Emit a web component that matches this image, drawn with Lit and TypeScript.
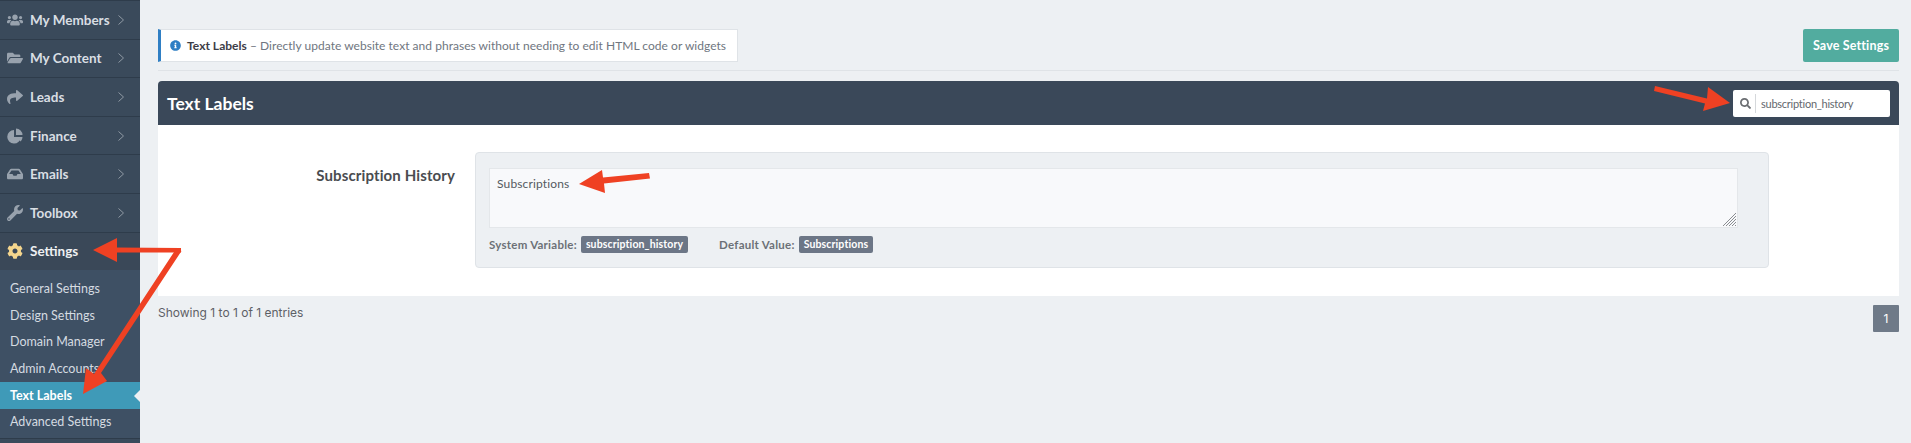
import { LitElement, html, css, svg } from "lit";
import { customElement } from "lit/decorators.js";

const I = {
  users: ["0 0 640 512", "M96 224c35.3 0 64-28.7 64-64s-28.7-64-64-64-64 28.7-64 64 28.7 64 64 64zm448 0c35.3 0 64-28.7 64-64s-28.7-64-64-64-64 28.7-64 64 28.7 64 64 64zm32 32h-64c-17.6 0-33.5 7.1-45.1 18.6 40.3 22.1 68.9 62 75.1 109.4h66c17.7 0 32-14.3 32-32v-32c0-35.3-28.7-64-64-64zm-256 0c61.9 0 112-50.1 112-112S381.9 32 320 32 208 82.1 208 144s50.1 112 112 112zm76.8 32h-8.3c-20.8 10-43.9 16-68.5 16s-47.6-6-68.5-16h-8.3C179.6 288 128 339.6 128 403.2V432c0 26.5 21.5 48 48 48h288c26.5 0 48-21.5 48-48v-28.8c0-63.6-51.6-115.2-115.2-115.2zm-223.7-13.4C161.5 263.1 145.6 256 128 256H64c-35.3 0-64 28.7-64 64v32c0 17.7 14.3 32 32 32h65.9c6.3-47.4 34.9-87.3 75.2-109.4z"],
  folder: ["0 0 576 512", "M572.694 292.093L500.27 416.248A63.997 63.997 0 0 1 444.989 448H45.025c-18.523 0-30.064-20.093-20.731-36.093l72.424-124.155A64 64 0 0 1 152 256h399.964c18.523 0 30.064 20.093 20.73 36.093zM152 224h328v-48c0-26.51-21.49-48-48-48H272l-64-64H48C21.49 64 0 85.49 0 112v278.046l69.077-118.418C86.214 242.25 117.989 224 152 224z"],
  share: ["0 0 512 512", "M503.691 189.836L327.687 37.851C312.281 24.546 288 35.347 288 56.015v80.053C127.371 137.907 0 170.1 0 322.326c0 61.441 39.581 122.309 83.333 154.132 13.653 9.931 33.111-2.533 28.077-18.631C66.066 312.814 132.917 274.316 288 272.085V360c0 20.7 24.3 31.453 39.687 18.164l176.004-152c11.071-9.562 11.086-26.753 0-36.328z"],
  pie: ["0 0 512 512", "M224 64A216 216 0 1 0 440 288H224ZM288 16V224H496A208 208 0 0 0 288 16ZM296 288L440 432A208 208 0 0 0 496 288Z"],
  inbox: ["0 0 576 512", "M567.938 243.908L462.25 85.374A48.003 48.003 0 0 0 422.311 64H153.689a48 48 0 0 0-39.938 21.374L8.062 243.908A47.994 47.994 0 0 0 0 270.533V400c0 26.51 21.49 48 48 48h480c26.51 0 48-21.49 48-48V270.533a47.994 47.994 0 0 0-8.062-26.625zM162.252 128h251.497l85.333 128H376l-32 64H232l-32-64H76.918l85.334-128z"],
  wrench: ["0 0 512 512", "M507.73 109.1c-2.24-9.03-13.54-12.09-20.12-5.51l-74.36 74.36-67.88-11.31-11.31-67.88 74.36-74.36c6.62-6.62 3.43-17.9-5.66-20.16-47.38-11.74-99.55.91-136.58 37.93-39.64 39.64-50.55 97.1-34.05 147.2L18.74 402.76c-24.99 24.99-24.99 65.51 0 90.5 24.99 24.99 65.51 24.99 90.5 0l213.21-213.21c50.12 16.71 107.47 5.68 147.37-34.22 37.07-37.07 49.7-89.32 37.91-136.73zM64 472c-13.25 0-24-10.75-24-24 0-13.26 10.75-24 24-24s24 10.74 24 24c0 13.25-10.75 24-24 24z"],
  cog: ["0 0 512 512", "M487.4 315.7l-42.6-24.6c4.3-23.2 4.3-47 0-70.2l42.6-24.6c4.9-2.8 7.1-8.6 5.5-14-11.1-35.6-30-67.8-54.7-94.6-3.8-4.1-10-5.1-14.8-2.3L380.8 110c-17.9-15.4-38.5-27.3-60.8-35.1V25.8c0-5.6-3.9-10.5-9.4-11.7-36.7-8.2-74.3-7.8-109.2 0-5.5 1.2-9.4 6.1-9.4 11.7V75c-22.2 7.9-42.8 19.8-60.8 35.1L88.7 85.5c-4.9-2.8-11-1.9-14.8 2.3-24.7 26.7-43.6 58.9-54.7 94.6-1.7 5.4.6 11.2 5.5 14L67.3 221c-4.3 23.2-4.3 47 0 70.2l-42.6 24.6c-4.9 2.8-7.1 8.6-5.5 14 11.1 35.6 30 67.8 54.7 94.6 3.8 4.1 10 5.1 14.8 2.3l42.6-24.6c17.9 15.4 38.5 27.3 60.8 35.1v49.2c0 5.6 3.9 10.5 9.4 11.7 36.7 8.2 74.3 7.8 109.2 0 5.5-1.2 9.4-6.1 9.4-11.7v-49.2c22.2-7.9 42.8-19.8 60.8-35.1l42.6 24.6c4.9 2.8 11 1.9 14.8-2.3 24.7-26.7 43.6-58.9 54.7-94.6 1.5-5.5-.7-11.3-5.6-14.1zM256 336c-44.1 0-80-35.9-80-80s35.9-80 80-80 80 35.9 80 80-35.9 80-80 80z"],
  info: ["0 0 512 512", "M256 8C119.043 8 8 119.083 8 256c0 136.997 111.043 248 248 248s248-111.003 248-248C504 119.083 392.957 8 256 8zm0 110c23.196 0 42 18.804 42 42s-18.804 42-42 42-42-18.804-42-42 18.804-42 42-42zm56 254c0 6.627-5.373 12-12 12h-88c-6.627 0-12-5.373-12-12v-24c0-6.627 5.373-12 12-12h12v-64h-12c-6.627 0-12-5.373-12-12v-24c0-6.627 5.373-12 12-12h64c6.627 0 12 5.373 12 12v100h12c6.627 0 12 5.373 12 12v24z"],
  search: ["0 0 512 512", "M505 442.7L405.3 343c-4.5-4.5-10.6-7-17-7H372c27.6-35.3 44-79.7 44-128C416 93.1 322.9 0 208 0S0 93.1 0 208s93.1 208 208 208c48.3 0 92.7-16.4 128-44v16.3c0 6.4 2.5 12.5 7 17l99.7 99.7c9.4 9.4 24.6 9.4 33.9 0l28.3-28.3c9.4-9.4 9.4-24.6.1-34zM208 336c-70.7 0-128-57.2-128-128 0-70.7 57.2-128 128-128 70.7 0 128 57.2 128 128 0 70.7-57.2 128-128 128z"],
} as const;

type IconName = keyof typeof I;
const icon = (n: IconName, cls = "") =>
  html`<svg class="ic ${cls}" viewBox=${I[n][0]} fill="currentColor"><path d=${I[n][1]}></path></svg>`;

const menu: [string, IconName][] = [
  ["My Members", "users"],
  ["My Content", "folder"],
  ["Leads", "share"],
  ["Finance", "pie"],
  ["Emails", "inbox"],
  ["Toolbox", "wrench"],
];
const sub = ["General Settings", "Design Settings", "Domain Manager", "Admin Accounts", "Text Labels", "Advanced Settings"];

@customElement("app-root")
export class AppRoot extends LitElement {
  static styles = css`
    :host {
      display: block;
      position: relative;
      width: 1911px;
      height: 443px;
      overflow: hidden;
      font-family: Lato, "Noto Sans", sans-serif;
      background: #edf0f3;
      color: #4b4f56;
    }
    .layout { display: flex; height: 443px; }
    .side {
      width: 140px;
      flex: none;
      background: #3a4a5b;
      border-top: 1px solid #2e3c4b;
      box-sizing: border-box;
    }
    .item {
      height: 38.6px;
      box-sizing: border-box;
      display: flex;
      align-items: center;
      border-bottom: 1px solid #2e3c4b;
      color: #d9dee3;
      font-size: 13.5px;
      font-weight: 700;
      letter-spacing: 0;
    }
    .item .iw { width: 30px; display: flex; justify-content: center; flex: none; color: #98a2ad; }
    .item .ic { width: 16px; height: 16px; }
    .item .lab { flex: 1; white-space: nowrap; }
    .chev { width: 6px; height: 10px; margin-right: 16px; flex: none; fill: none; stroke: #8f99a4; stroke-width: 1; }
    .item.open { color: #eef0f2; background: #3a4858; height: 37px; border-bottom: 0; }
    .item.open .iw { color: #f4d58d; }
    .subm { background: #3e5064; padding-top: 5.5px; border-bottom: 1px solid #2e3c4b; height: 169px; box-sizing: border-box; }
    .si {
      height: 26.7px;
      display: flex;
      align-items: center;
      padding-left: 10px;
      font-size: 12.5px;
      font-weight: 400;
      letter-spacing: 0;
      color: #d5dbe1;
      position: relative;
    }
    .si.on { background: #3f9ab8; color: #fff; font-weight: 700; }
    .si.on::after {
      content: "";
      position: absolute;
      right: 0;
      top: 8px;
      border: 6px solid transparent;
      border-right-color: #edf0f3;
      border-left-width: 0;
    }
    .main { flex: 1; min-width: 0; padding: 29px 12px 0 18px; }
    .top {
      display: flex;
      justify-content: space-between;
      align-items: flex-start;
      height: 42px;
      box-sizing: border-box;
      border-bottom: 1px solid #dfe3e7;
    }
    .notice {
      width: 580px;
      height: 33px;
      box-sizing: border-box;
      background: #fff;
      border: 1px solid #dfe3e7;
      border-left: 3px solid #2f7fc4;
      display: flex;
      align-items: center;
      font-size: 12px;
      letter-spacing: 0.03px;
      color: #6f7680;
      white-space: nowrap;
    }
    .notice .ic { width: 11px; height: 11px; margin: 0 6px 0 9px; color: #2f7fc4; flex: none; }
    .notice b { font-weight: 700; color: #3d3d47; }
    .save {
      width: 96px;
      height: 33px;
      box-sizing: border-box;
      border: 0;
      border-radius: 2px;
      background: #52ac9f;
      color: #fff;
      font: 700 12.5px Lato, sans-serif;
      letter-spacing: 0.15px;
    }
    .head {
      margin-top: 10px;
      height: 44px;
      background: #3a4859;
      border-radius: 4px 4px 0 0;
      display: flex;
      align-items: center;
      justify-content: space-between;
      padding: 0 9px;
      color: #fff;
      font-size: 17.5px;
      font-weight: 700;
    }
    .search {
      width: 157px;
      height: 27px;
      background: #fff;
      border-radius: 2px;
      display: flex;
      align-items: center;
      box-sizing: border-box;
    }
    .search .ic { width: 11px; height: 11px; margin: 0 4px 0 7px; color: #6b6e72; flex: none; }
    .search input {
      flex: 1;
      min-width: 0;
      height: 19px;
      border: 0;
      border-left: 1px solid #d5d8db;
      outline: 0;
      padding: 0 0 0 5px;
      background: transparent;
      font: 400 11px Lato, sans-serif;
      letter-spacing: -0.25px;
      color: #63676d;
    }
    .body {
      background: #fff;
      height: 171px;
      box-sizing: border-box;
      padding-top: 27px;
      display: flex;
      gap: 20px;
      align-items: flex-start;
    }
    .name {
      width: 297px;
      text-align: right;
      font-size: 15px;
      font-weight: 700;
      letter-spacing: 0.12px;
      color: #4a4c50;
      line-height: 20px;
      padding-top: 13px;
      box-sizing: border-box;
    }
    .well {
      width: 1294px;
      height: 116px;
      box-sizing: border-box;
      background: #edf0f3;
      border: 1px solid #dfe3e7;
      border-radius: 4px;
      padding: 15px 30px 0 13px;
    }
    .ta { position: relative; width: 1249px; height: 60px; }
    textarea {
      display: block;
      width: 100%;
      height: 100%;
      box-sizing: border-box;
      margin: 0;
      border: 1px solid #e4e7ea;
      background: #f8f9fb;
      padding: 7px 7px;
      outline: 0;
      resize: none;
      font: 400 12px Lato, sans-serif;
      letter-spacing: 0.15px;
      color: #55595f;
    }
    .grip { position: absolute; right: 1px; bottom: 1px; width: 15px; height: 15px; stroke: #8a8d91; stroke-width: 1; fill: none; }
    .meta {
      margin-top: 8px;
      display: flex;
      align-items: center;
      font-size: 11.5px;
      font-weight: 700;
      letter-spacing: 0.25px;
      color: #6c7077;
      white-space: nowrap;
    }
    .badge {
      height: 17px;
      line-height: 17px;
      padding: 0 5px;
      border-radius: 2px;
      background: #6c7686;
      color: #fff;
      font-size: 10.5px;
      margin-left: 4px;
      letter-spacing: 0.13px;
    }
    .v { margin-left: 31px; }
    .foot { display: flex; justify-content: space-between; align-items: flex-start; padding-top: 9px; }
    .foot span { font: 400 12px Inter, sans-serif; color: #5d6066; line-height: 16px; }
    .page {
      width: 26px;
      height: 27px;
      background: #6f7a88;
      color: #fff;
      border-radius: 1px;
      display: flex;
      align-items: center;
      justify-content: center;
      font: 400 12px Inter, sans-serif;
    }
    .arrows { position: absolute; inset: 0; pointer-events: none; }
  `;

  render() {
    return html`
      <div class="layout">
        <nav class="side">
          ${menu.map(
            ([t, i]) => html`<div class="item">
              <span class="iw">${icon(i)}</span><span class="lab">${t}</span>
              <svg class="chev" viewBox="0 0 6 10"><path d="M.5.5 5.5 5 .5 9.5"></path></svg>
            </div>`
          )}
          <div class="item open"><span class="iw">${icon("cog")}</span><span class="lab">Settings</span></div>
          <div class="subm">
            ${sub.map((s) => html`<div class="si ${s === "Text Labels" ? "on" : ""}">${s}</div>`)}
          </div>
        </nav>
        <main class="main">
          <div class="top">
            <div class="notice">
              ${icon("info")}<span><b>Text Labels</b> – Directly update website text and phrases without needing to edit HTML code or widgets</span>
            </div>
            <button class="save">Save Settings</button>
          </div>
          <div class="head">
            <span>Text Labels</span>
            <div class="search">${icon("search")}<input .value=${"subscription_history"} /></div>
          </div>
          <div class="body">
            <div class="name">Subscription History</div>
            <div class="well">
              <div class="ta">
                <textarea .value=${"Subscriptions"}></textarea>
                <svg class="grip" viewBox="0 0 15 15"><path d="M14 1 1 14M14 4 4 14M14 7 7 14M14 10 10 14M14 13 13 14"></path></svg>
              </div>
              <div class="meta">
                System Variable: <span class="badge">subscription_history</span>
                <span class="v">Default Value:</span> <span class="badge">Subscriptions</span>
              </div>
            </div>
          </div>
          <div class="foot">
            <span>Showing 1 to 1 of 1 entries</span>
            <div class="page">1</div>
          </div>
        </main>
      </div>
      <svg class="arrows" viewBox="0 0 1911 443" fill="#ef4123" stroke="none">
        ${svg`
          <path d="M1655 86 1707 98.5 1708 87 1730 103 1703 111 1705 103.5 1654 91Z"></path>
          <path d="M649 173 603 177.5 602 170 579 184 605 193 604 183.5 650 178.5Z"></path>
          <path d="M93 250 117 238 117 247.5 181 248 181 252.5 117 252.5 117 262Z"></path>
          <path d="M176 249 181.5 251 101 373 107 381 83 394 86 368 94 374Z"></path>
        `}
      </svg>
    `;
  }
}
